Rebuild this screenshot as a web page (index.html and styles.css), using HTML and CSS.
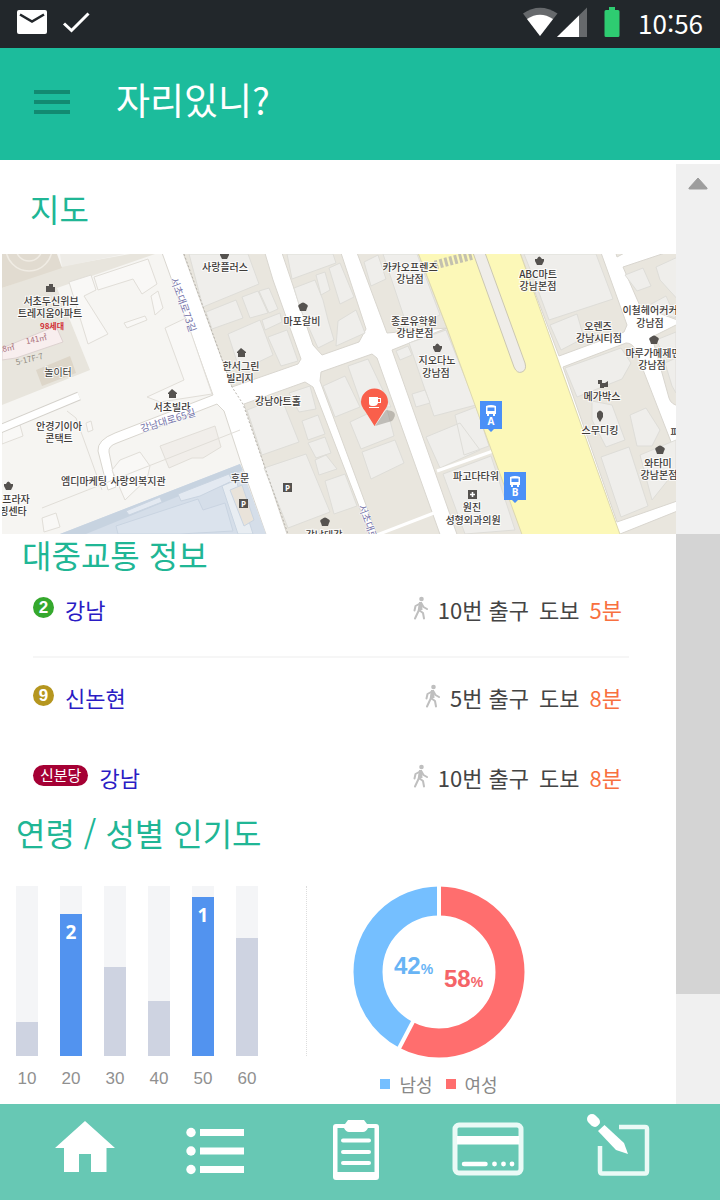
FILE: index.html
```html
<!DOCTYPE html>
<html lang="ko">
<head>
<meta charset="utf-8">
<meta name="viewport" content="width=device-width, initial-scale=1">
<title>자리있니?</title>
<link rel="stylesheet" href="styles.css">
</head>
<body>
<div class="status">
  <svg class="status-left" width="76" height="48" viewBox="16 0 76 48" aria-hidden="true">
    <rect x="17" y="10" width="30" height="24" rx="2" fill="#fff"/>
    <path d="M20 14.500L32 21.500L44 14.500" fill="none" stroke="#22262a" stroke-width="2.600"/>
    <path d="M64 23.500L71.500 30.500L88.500 13.500" fill="none" stroke="#fff" stroke-width="3"/>
  </svg>
  <svg class="status-right" width="100" height="48" viewBox="522 0 100 48" aria-hidden="true">
    <path d="M523 13.500Q540 2 557.500 13.500L540 36Z" fill="#66696c"/>
    <path d="M527 19Q540 10.500 553 19L540 36Z" fill="#fff"/>
    <path d="M587 7.500V37H557Z" fill="#66696c"/>
    <path d="M579 15.500V37H557Z" fill="#fff"/>
    <path d="M609 7H615V10H618Q619.500 10 619.500 11.500V35.500Q619.500 37 618 37H606Q604.500 37 604.500 35.500V11.500Q604.500 10 606 10H609Z" fill="#2ecc71"/>
  </svg>
  <time class="clock">10:56</time>
</div>

<header class="appbar">
  <button class="menu" type="button" aria-label="메뉴"><span></span><span></span><span></span></button>
  <h1 class="app-title">자리있니?</h1>
</header>

<div class="body">
  <main class="content">
    <h2 class="heading heading-map">지도</h2>
    <svg class="map" viewBox="2 254 674 280" role="img" aria-label="강남역 주변 지도">
      <rect x="2" y="254" width="674" height="280" fill="#fff"/>
      <g stroke="#d9d6cf" stroke-width="1">
        <path fill="#f6f5f2" d="M0 250H161L213 395L115 433Q97 440 98 451L108 490L116 487L109 452Q108 446 117 443L217 404L224 411L241 463L268 540H0Z"/>
        <path fill="#e9e6de" d="M182 250L232 387L298 364L301 359L273 280L264 250Z"/>
        <path fill="#e9e6de" d="M281 250L313 345L322 355L359 342L366 329L340 250Z"/>
        <path fill="#e9e6de" d="M356 250L387 333L447 328L417 250Z"/>
        <path fill="#e9e6de" d="M244 404L305 382L313 387L372 540H289Z"/>
        <path fill="#e9e6de" d="M321 372L372 354L377 358L442 540H379L320 381Z"/>
        <path fill="#e9e6de" d="M392 350L447 328L525 540H459Z"/>
        <path fill="#e9e6de" d="M519 250H600L627 325L624 332L559 356Z"/>
        <path fill="#e9e6de" d="M563 367L626 343Q632 343 635 349L680 465V500L617 522Z"/>
        <path fill="#e9e6de" d="M617 257L630 250H615ZM623 267L680 248V321L640 306Z"/>
        <path fill="#e9e6de" d="M652 337L680 323V406Q671 405 669 398Z"/>
        <path fill="#e9e6de" d="M620 534L680 510V540H622Z"/>
      </g>

      <path fill="#e8e5dd" d="M2 310V288L63 266L130 254H155L57 288L90 370L2 405Z"/>
      <path fill="#e1dbd0" d="M2 254H57L62 268L2 288Z"/>
      <path fill="#eeece7" d="M60 254H125L62 267Z"/>
      <g fill="none" stroke="#f0ece4" stroke-width="1.500">
        <circle cx="29" cy="248" r="13"/><circle cx="29" cy="248" r="23"/>
      </g>
      <path fill="#ddd6c9" d="M36 370L70 356L76 373L42 386Z"/>
      <path fill="#f8eeee" stroke="#ddd2d0" d="M2 348L56 326L63 342L16 358L2 360Z"/>
      <g fill="#f9f8f6" stroke="#e1ded8" stroke-width="1">
        <path d="M69 282L91 275L96 290L84 296L108 334L88 344Z"/>
        <path d="M94 277L148 259L157 284L142 294L133 279L98 290Z"/>
        <path d="M124 323L145 316L147 320L127 328ZM151 296L158 291L163 308L155 315Z"/>
        <path d="M165 328L186 318L212 394L160 402L147 397L184 380Z"/>
        <path fill="#f1eeea" d="M160 446L215 426L221 447L203 458L192 458L169 468Z"/>
        <path d="M120 460L140 452L150 466L147 479L125 500L112 470Z"/>
        <path d="M2 431L20 425L23 436L2 444ZM42 518L56 513L60 527L44 532ZM86 423L91 421L93 430L88 432Z"/>
        <path fill="none" d="M67 411L76 418L102 490M42 508L240 430"/>
      </g>
      <path d="M0 429L79 396" stroke="#d4d1cb" stroke-width="9"/>
      <path d="M0 429L79 396" stroke="#fff" stroke-width="7"/>

      <path fill="#d5dee9" d="M60 534L240 464L266 534Z"/>
      <path fill="#c7d3e0" d="M60 534L240 464L243 470L86 534Z"/>
      <g fill="#e3e9f1" stroke="#c9d4e1" stroke-width="1">
        <path d="M126 511L160 497L162 502L129 515ZM178 494L229 474L232 481L200 496L181 501Z"/>
        <path fill="#dbe3ed" d="M116 526L198 499L203 510L225 503L233 531L180 534H118Z"/>
        <path fill="#e8edf2" d="M222 486L236 480L253 534H238Z"/>
        <path fill="#e9e3da" d="M230 490L242 485L254 520L244 526Z"/>
      </g>

      <g fill="#efeeeb" stroke="#deddd8" stroke-width="1">
        <path d="M189 254H248L259 284L203 307ZM206 312L236 300L243 318L212 329ZM242 297L258 291L268 313L250 318ZM259 291L269 288L278 309L269 313ZM228 334L260 320L273 355L240 371ZM262 320L280 313L282 322L265 330ZM268 337L287 330L298 361L281 366Z"/>
        <path d="M287 254H333L336 263L292 279ZM294 288L315 280L323 300L328 320L334 340L318 348L300 308ZM316 275L325 272L330 290L321 295ZM329 268L340 263L354 297L340 304ZM338 321L356 310L365 333L336 346Z"/>
        <path d="M364 262L378 255L386 279L371 286ZM383 254H417L440 315L408 329ZM396 351L408 346L412 355L400 360ZM409 343L446 330L476 405L434 416Z"/>
        <path d="M247 410L281 397L299 442L262 455ZM289 393L310 386L316 409L299 412ZM302 421L318 415L325 434L308 440ZM308 443L325 437L331 453L316 458ZM315 460L326 455L337 469L319 475ZM264 468L306 454L330 512L288 528ZM325 481L345 474L357 506L334 514Z"/>
        <path d="M323 386L345 376L360 407L335 417ZM348 366L368 359L391 407L362 406ZM350 422L386 405L394 436L361 449ZM362 452L395 440L404 463L371 479Z"/>
        <path d="M412 394L425 390L430 403L416 407ZM426 437L460 423L480 450L440 468ZM455 415L476 407L489 446L464 455ZM443 474L491 456L515 530L465 534Z"/>
        <path d="M524 254H596L613 299L549 320L534 279ZM550 325L577 314L584 338L561 350ZM565 368L621 348L631 363L622 379L577 397ZM592 401L612 405L625 440L606 447L592 420ZM601 457L629 447L648 506L621 517ZM630 415L646 408L660 430L652 446L637 446Z"/>
        <path d="M625 275L643 268L651 286L637 291ZM656 267L680 256V302L660 280ZM644 308L666 296L676 318ZM656 340L676 332V355H664ZM665 363L676 358V393L672 386ZM640 455L676 440V470L652 500Z"/>
      </g>
      <path d="M437 471L493 451M377 535L434 513" stroke="#fff" stroke-width="3"/>
      <path d="M184 254L232 387L243 404L288 534" fill="none" stroke="#b8b4ad" stroke-dasharray="2 2"/>

      <path fill="#fcf8b8" stroke="#ddd8b0" d="M417 250L447 328L524 540H622L519 250Z"/>
      <path fill="#efede9" stroke="#cbc7b2" d="M472 250L514 367Q517 374 522 372Q527 370 525 363L484 250Z"/>
      <path d="M435 265L473 255" stroke="#c4c1af" stroke-width="9" stroke-dasharray="3 2"/>

      <path d="M375 426L386 410Q400 411 392 421Z" fill="#77736c" opacity=".4"/>
      <path fill="#f95f4b" d="M374.500 426L365 411Q361 406 361 402A13.500 13.500 0 0 1 388 402Q388 406 384 411Z"/>
      <path fill="#fff" d="M369 397H378V398H381V403H378Q377 406 374 406H372Q369 406 369 403ZM369 407H379V408H369Z"/>
      <path d="M378 399H380V402H378Z" fill="#f95f4b"/>
      <g id="stop-a">
        <path fill="#4a90f7" d="M480 401H502V429H494L491 432L488 429H480Z"/>
        <path fill="#fff" d="M486 406Q491 404 496 406V414H495V416H493V414H489V416H487V414H486Z"/>
        <path fill="#4a90f7" d="M487.500 407.500H494.500V411H487.500Z"/>
      </g>
      <use href="#stop-a" x="24" y="71"/>
      <g class="stop-name"><text x="491" y="425">A</text><text x="515" y="496">B</text></g>

      <g fill="#55524f">
        <path d="M46 292V286H49V284H53V287H55V292ZM168 393L172 389L177 393V394H176V398H169V394H168ZM237 352L241 348L246 352V353H245V357H238V353H237Z"/>
        <path id="chef" d="M299 308Q297 305 300 304Q303 301 306 304Q309 305 307 308L306 311H300Z"/>
        <use href="#chef" x="22" y="215"/><use href="#chef" x="351" y="33"/><use href="#chef" x="357" y="143"/>
        <path id="bag" d="M433 346H435Q437 341 440 346H442V348L440 352H435L433 348Z"/>
        <use href="#bag" x="102" y="-87"/><use href="#bag" x="-429" y="138"/><use href="#bag" x="-213" y="-93"/>
        <path d="M598 380H602V383H605L608 381V387H604V388H600V384H598ZM597 417V413Q600 408 603 413V417L600 422Z"/>
        <path d="M468 490H477V499H468ZM283 483H292V492H283ZM239 499H248V508H239Z"/>
      </g>
      <path d="M472.500 492V497M470 494.500H475" stroke="#fff" stroke-width="1.600"/>
      <g class="parking"><text x="287.500" y="490.500">P</text><text x="243.500" y="506.500">P</text></g>

      <g class="place">
        <text x="225" y="271">사랑플러스</text>
        <text x="51" y="305">서초두신위브</text><text x="50" y="317">트레지움아파트</text>
        <text x="58" y="376" class="plain">놀이터</text>
        <text x="172" y="411">서초빌라</text>
        <text x="59" y="430">안경기이아</text><text x="59" y="442">콘택트</text>
        <text x="84" y="485">엠디마케팅</text><text x="138" y="485">사랑의복지관</text>
        <text x="16" y="503">프라자</text><text x="13" y="515">핑센타</text>
        <text x="240" y="482">후문</text>
        <text x="302" y="325">마포갈비</text>
        <text x="241" y="370">한서그린</text><text x="240" y="382">빌리지</text>
        <text x="278" y="405">강남아트홀</text>
        <text x="324" y="539">강남대강</text>
        <text x="410" y="271">카카오프렌즈</text><text x="410" y="283">강남점</text>
        <text x="414" y="325">종로유학원</text><text x="415" y="337">강남본점</text>
        <text x="437" y="364">지오다노</text><text x="436" y="377">강남점</text>
        <text x="538" y="278">ABC마트</text><text x="538" y="290">강남본점</text>
        <text x="598" y="330">오렌즈</text><text x="599" y="342">강남시티점</text>
        <text x="602" y="400">메가박스</text><text x="600" y="434">스무디킹</text>
        <text x="650" y="314">이철헤어커커</text><text x="650" y="327">강남점</text>
        <text x="653" y="357">마루가메제면</text><text x="652" y="369">강남점</text>
        <text x="658" y="467">와타미</text><text x="659" y="479">강남본점</text>
        <text x="675" y="436">파</text>
        <text x="476" y="480">파고다타워</text>
        <text x="472" y="511">원진</text><text x="473" y="524">성형외과의원</text>
      </g>
      <g class="note">
        <text x="52" y="329" class="units">98세대</text>
        <text transform="translate(37 342) rotate(-12)">141㎡</text>
        <text transform="translate(8 351) rotate(-12)">.8㎡</text>
        <text transform="translate(30 362) rotate(-14)" class="lot">5-17F-7</text>
      </g>
      <g class="road">
        <text transform="translate(180 306) rotate(70)">서초대로73길</text>
        <text transform="translate(169 424) rotate(-17)">강남대로65길</text>
        <text transform="translate(368 533) rotate(70)">서초대로73길</text>
      </g>
    </svg>

    <h2 class="heading heading-transit">대중교통 정보</h2>
    <ul class="stations">
      <li class="station station-ruled">
        <span class="line line-2">2</span><a class="name" href="#gangnam">강남</a>
        <span class="walk"><svg class="walker" viewBox="0 0 16 24" aria-hidden="true"><use href="#walker"/></svg><span>10번 출구</span><span>도보</span><span class="minutes">5분</span></span>
      </li>
      <li class="station">
        <span class="line line-9">9</span><a class="name" href="#sinnonhyeon">신논현</a>
        <span class="walk"><svg class="walker" viewBox="0 0 16 24" aria-hidden="true"><use href="#walker"/></svg><span>5번 출구</span><span>도보</span><span class="minutes">8분</span></span>
      </li>
      <li class="station station-last">
        <span class="line line-sb">신분당</span><a class="name" href="#gangnam-sb">강남</a>
        <span class="walk"><svg class="walker" viewBox="0 0 16 24" aria-hidden="true"><g id="walker"><circle cx="9.500" cy="3" r="2.300" fill="#bfbfbf"/><path d="M8.500 7L6.500 15L3 22.500M7 14L11 17L12 22.500M8 7.500L3.500 10L2.500 14.500M9.500 7.500L11.500 11L15 13" fill="none" stroke="#bfbfbf" stroke-width="2" stroke-linecap="round" stroke-linejoin="round"/><path d="M7 6H10L10.500 14H6Z" fill="#bfbfbf"/></g></svg><span>10번 출구</span><span>도보</span><span class="minutes">8분</span></span>
      </li>
    </ul>

    <h2 class="heading heading-popular">연령 / 성별 인기도</h2>
    <section class="charts">
      <div class="bars">
        <div class="bar"><div class="track"><div class="fill" style="height:20%"></div></div><span class="age">10</span></div>
        <div class="bar"><div class="track"><div class="fill fill-top" style="height:83.500%">2</div></div><span class="age">20</span></div>
        <div class="bar"><div class="track"><div class="fill" style="height:52.500%"></div></div><span class="age">30</span></div>
        <div class="bar"><div class="track"><div class="fill" style="height:32.500%"></div></div><span class="age">40</span></div>
        <div class="bar"><div class="track"><div class="fill fill-top" style="height:93.500%">1</div></div><span class="age">50</span></div>
        <div class="bar"><div class="track"><div class="fill" style="height:69.500%"></div></div><span class="age">60</span></div>
      </div>
      <div class="rule"></div>
      <figure class="gender">
        <svg class="donut" width="172" height="172" viewBox="353 885 172 172" role="img" aria-label="남성 42%, 여성 58%">
          <g fill="none" stroke-width="29">
            <circle cx="439" cy="971" r="71" stroke="#ff6e6e" pathLength="100" stroke-dasharray="57.700 42.300" transform="rotate(-90 439 971)"/>
            <circle cx="439" cy="971" r="71" stroke="#75bfff" pathLength="100" stroke-dasharray="0 57.700 42.300 0" transform="rotate(-90 439 971)"/>
          </g>
          <path d="M439 971V880M439 971L395 1055" stroke="#fff" stroke-width="4"/>
          <text class="share male" x="394" y="973">42<tspan class="percent">%</tspan></text>
          <text class="share female" x="444" y="986">58<tspan class="percent">%</tspan></text>
        </svg>
        <figcaption class="legend">
          <span class="key key-male">남성</span><span class="key key-female">여성</span>
        </figcaption>
      </figure>
    </section>
  </main>

  <div class="scrollbar">
    <button class="scroll-up" type="button" aria-label="위로"><svg width="20" height="13" viewBox="0 0 20 13"><path d="M10 1L19 11Q19.500 12 18.500 12H1.500Q.5 12 1 11Z" fill="#9d9d9d" stroke="#9d9d9d" stroke-linejoin="round"/></svg></button>
    <div class="before"></div>
    <div class="thumb"></div>
    <div class="after"></div>
  </div>
</div>

<nav class="tabs">
  <a href="#home" aria-label="홈"><svg viewBox="19 1104 133 96"><path fill="#fff" d="M85 1121L115 1148H106.500V1172H91V1154H79V1172H64V1148H55Z"/></svg></a>
  <a href="#list" aria-label="목록"><svg viewBox="152 1104 133 96"><g fill="#fff"><circle cx="191" cy="1132.500" r="4.700"/><circle cx="191" cy="1151" r="4.700"/><circle cx="191" cy="1169.500" r="4.700"/><path d="M200 1129H244V1136H200ZM200 1147.500H244V1154.500H200ZM200 1166H244V1173H200Z"/></g></svg></a>
  <a href="#board" aria-label="게시판"><svg viewBox="285 1104 133 96"><path fill="#fff" fill-rule="evenodd" d="M336 1124H345L348 1120H364L367 1124H376Q379 1124 379 1127V1177Q379 1180 376 1180H336Q333 1180 333 1177V1127Q333 1124 336 1124ZM337.500 1128V1172H374.500V1128H368Q366 1132 363 1132H349Q346 1132 344 1128Z"/><path d="M343 1140.500H369M343 1152H369M343 1163H369" stroke="#fff" stroke-width="4" stroke-linecap="round"/></svg></a>
  <a href="#card" aria-label="결제"><svg viewBox="418 1104 133 96"><rect x="455" y="1125" width="66" height="48" rx="4" fill="none" stroke="#eafaf6" stroke-width="5"/><path d="M457 1136H519V1144.500H457Z" fill="#fff"/><path d="M464 1164H485.500" stroke="#fff" stroke-width="4.500" stroke-linecap="round"/><g fill="#fff"><circle cx="494.500" cy="1164" r="2.400"/><circle cx="503.500" cy="1164" r="2.400"/><circle cx="512" cy="1164" r="2.400"/></g></svg></a>
  <a href="#write" aria-label="글쓰기"><svg viewBox="551 1104 133 96"><path d="M619 1127H645Q647 1127 647 1129V1171Q647 1173.500 645 1173.500H602Q600 1173.500 600 1171V1146" fill="none" stroke="#eafaf6" stroke-width="4.500"/><path fill="#fff" d="M604.500 1125L598 1131L616 1150L628 1154L624 1143Z"/><path d="M592 1119L595 1122" stroke="#fff" stroke-width="10" stroke-linecap="round"/><path d="M593.500 1132L605 1120.500" stroke="#67c8b4" stroke-width="3"/></svg></a>
</nav>
</body>
</html>
```
FILE: styles.css
```css
* { box-sizing: border-box; }

body {
  margin: 0;
  min-height: 100vh;
  display: flex;
  flex-direction: column;
  background: #fff;
  font-family: "Noto Sans CJK KR", "Noto Sans", sans-serif;
}

h1, h2, ul, figure { margin: 0; padding: 0; font-weight: 400; }
button { border: 0; padding: 0; background: none; }

.status {
  display: flex;
  align-items: center;
  height: 48px;
  padding: 0 17px 0 16px;
  background: #22272b;
  color: #fff;
}
.status-right { margin-left: auto; }
.clock { margin-left: 16px; padding-bottom: 2px; font-size: 26px; line-height: 46px; }

.appbar {
  display: flex;
  align-items: center;
  gap: 46px;
  height: 112px;
  padding: 0 34px;
  background: #1cbc9c;
}
.menu {
  display: flex;
  flex-direction: column;
  gap: 6px;
  width: 36px;
  padding-bottom: 4px;
}
.menu span { height: 4px; background: #128a71; }
.app-title { padding-bottom: 10px; color: #fff; font-size: 37px; line-height: 48px; }

.body { display: flex; flex: 1; }
.content { flex: 1; min-width: 0; }

.heading { color: #20b695; font-size: 32px; line-height: 40px; }
.heading-map { padding: 28px 30px 26px; }
.heading-transit { padding-left: 22px; }
.heading-popular { padding-left: 16px; line-height: 28px; }

.map { display: block; width: calc(100% - 2px); margin-left: 2px; }
.place { fill: #3d3a38; stroke: #fff; stroke-width: 2px; stroke-opacity: .8; paint-order: stroke; font-size: 10px; font-weight: 500; text-anchor: middle; }
.plain { font-weight: 400; }
.road { fill: #7472a8; stroke: #fff; stroke-width: 1px; paint-order: stroke; font-size: 10px; text-anchor: middle; }
.note { fill: #a8707a; font-size: 8px; text-anchor: middle; }
.units { fill: #d22f35; font-weight: 700; }
.lot { fill: #8f8a80; }
.stop-name { fill: #fff; font: 700 10px "Open Sans", sans-serif; text-anchor: middle; }
.parking { fill: #fff; font: 700 8px "Open Sans", sans-serif; text-anchor: middle; }

.stations { margin: 0 47px 0 33px; list-style: none; }
.station { display: flex; align-items: center; height: 78px; padding-right: 7px; font-size: 22px; line-height: 32px; }
.station-ruled { height: 84px; padding-bottom: 12px; border-bottom: 2px solid #f6f6f6; }
.station-last { height: 82px; }
.line {
  min-width: 21px;
  height: 21px;
  margin: 0 11px 3px 0;
  border-radius: 11px;
  color: #fff;
  font: 700 17px/21px "Liberation Sans", sans-serif;
  text-align: center;
}
.line-2 { background: #35a82d; }
.line-9 { background: #b5961f; }
.line-sb { padding: 0 7px; background: #a50034; font: 400 15px/20px "Noto Sans CJK KR", sans-serif; }
.name { color: #2a1cc4; text-decoration: none; }
.walk { display: flex; align-items: center; gap: 10px; margin-left: auto; color: #444; }
.walker { width: 16px; height: 24px; margin-bottom: 3px; }
.minutes { color: #f8703f; }

.charts { display: flex; padding: 40px 16px 6px; }
.bars { display: flex; gap: 22px; }
.bar { width: 22px; }
.track { display: flex; align-items: flex-end; height: 170px; background: #f4f5f7; }
.fill { width: 100%; background: #ced3e1; }
.fill-top { padding-top: 4px; background: #5293ef; color: #fff; font: 700 19px/28px "Open Sans", sans-serif; text-align: center; }
.age { display: block; padding-top: 12px; color: #909090; font: 17px/22px "Liberation Sans", sans-serif; text-align: center; }
.rule { height: 170px; margin: 0 46px 0 48px; border-left: 1px dotted #ddd; }

.donut { display: block; }
.share { font: 700 24px "Liberation Sans", sans-serif; }
.percent { font-size: 14px; }
.male { fill: #68b4f5; }
.female { fill: #f56468; }
.legend { display: flex; justify-content: center; gap: 13px; padding-top: 12px; color: #888; font-size: 18px; line-height: 28px; }
.key { display: flex; align-items: center; gap: 9px; }
.key::before { content: ""; width: 10px; height: 10px; background: #75bfff; }
.key-female::before { background: #ff6e6e; }

.scrollbar { display: flex; flex-direction: column; width: 44px; margin-top: 4px; background: #f0f0f0; }
.scroll-up { height: 38px; }
.scroll-up svg { display: block; margin: 0 auto; }
.before { flex: 332; }
.thumb { flex: 460; background: #d4d4d4; }
.after { flex: 110; }

.tabs { display: grid; grid-template-columns: repeat(5, 1fr); height: 96px; padding: 0 36px 0 19px; background: #67c8b4; }
.tabs svg { display: block; width: 100%; height: 96px; }
```
